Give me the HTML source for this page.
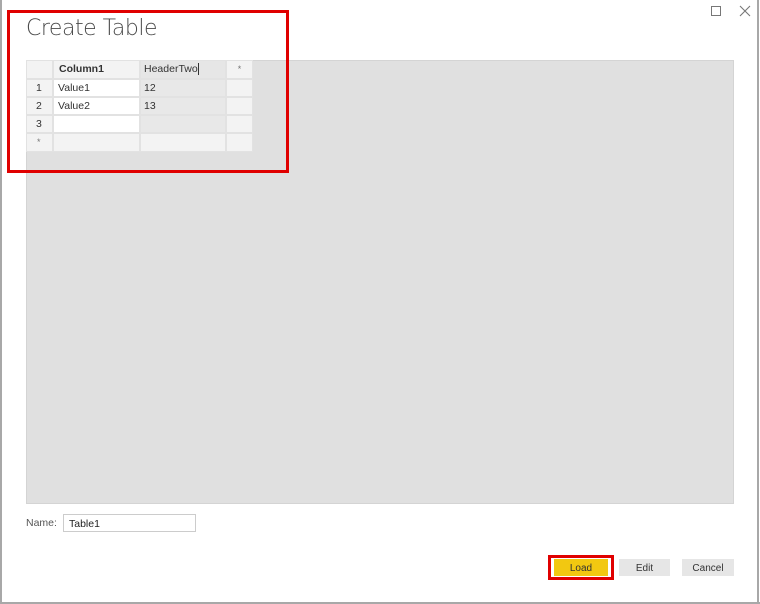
<!DOCTYPE html>
<html><head><style>
body{margin:0;width:760px;height:604px;background:#fff;position:relative;overflow:hidden;font-family:"Liberation Sans",sans-serif;}
.a{position:absolute;box-sizing:border-box}
.c{position:absolute;box-sizing:border-box;font-size:10.5px;color:#333;line-height:17px;padding-left:4px}
</style></head><body>
<div class="a" style="left:0;top:0;width:2px;height:604px;background:#a8a8a8"></div>
<div class="a" style="left:757px;top:0;width:2px;height:604px;background:#a8a8a8"></div>
<div class="a" style="left:0;top:602px;width:760px;height:2px;background:#a8a8a8"></div>
<div class="a" style="left:26px;top:16px;font-size:22px;color:#4a4a4a;font-family:'DejaVu Sans','Liberation Sans',sans-serif;font-weight:300;letter-spacing:-0.5px">Create Table</div>
<div class="a" style="left:711px;top:6px;width:10px;height:10px;border:1px solid #777"></div>
<svg class="a" style="left:739px;top:5px" width="12" height="12"><path d="M1 1L11 11M11 1L1 11" stroke="#777" stroke-width="1.1"/></svg>
<div class="a" style="left:26px;top:60px;width:708px;height:444px;background:#e0e0e0;border:1px solid #d4d4d4"></div>
<div class="a" style="left:26px;top:60px;width:227px;height:92px;background:#e2e2e2"></div>
<div class="c" style="left:27px;top:61px;width:25px;height:17px;background:#f3f3f3"></div>
<div class="c" style="left:54px;top:61px;width:85px;height:17px;background:#f3f3f3;font-weight:bold;padding-left:5px">Column1</div>
<div class="c" style="left:141px;top:61px;width:84px;height:17px;background:#e6e6e6;padding-left:3px">HeaderTwo<span style="border-left:1px solid #333;margin-left:0"></span></div>
<div class="c" style="left:227px;top:61px;width:25px;height:17px;background:#f3f3f3;text-align:center;padding:0;font-size:9px;color:#777">*</div>
<div class="c" style="left:27px;top:80px;width:25px;height:16px;background:#f3f3f3;padding-left:9px">1</div>
<div class="c" style="left:54px;top:80px;width:85px;height:16px;background:#fff">Value1</div>
<div class="c" style="left:141px;top:80px;width:84px;height:16px;background:#e8e8e8;padding-left:3px">12</div>
<div class="c" style="left:227px;top:80px;width:25px;height:16px;background:#f3f3f3"></div>
<div class="c" style="left:27px;top:98px;width:25px;height:16px;background:#f3f3f3;padding-left:9px">2</div>
<div class="c" style="left:54px;top:98px;width:85px;height:16px;background:#fff">Value2</div>
<div class="c" style="left:141px;top:98px;width:84px;height:16px;background:#e8e8e8;padding-left:3px">13</div>
<div class="c" style="left:227px;top:98px;width:25px;height:16px;background:#f3f3f3"></div>
<div class="c" style="left:27px;top:116px;width:25px;height:16px;background:#f3f3f3;padding-left:9px">3</div>
<div class="c" style="left:54px;top:116px;width:85px;height:16px;background:#fff"></div>
<div class="c" style="left:141px;top:116px;width:84px;height:16px;background:#e8e8e8"></div>
<div class="c" style="left:227px;top:116px;width:25px;height:16px;background:#f3f3f3"></div>
<div class="c" style="left:27px;top:134px;width:25px;height:17px;background:#f3f3f3;padding-left:10px;font-size:9px;color:#777">*</div>
<div class="c" style="left:54px;top:134px;width:85px;height:17px;background:#f3f3f3"></div>
<div class="c" style="left:141px;top:134px;width:84px;height:17px;background:#f3f3f3"></div>
<div class="c" style="left:227px;top:134px;width:25px;height:17px;background:#f3f3f3"></div>
<div class="a" style="left:7px;top:10px;width:282px;height:163px;border:3px solid #e00000"></div>
<div class="a" style="left:26px;top:517px;font-size:10.5px;color:#555">Name:</div>
<div class="a" style="left:63px;top:514px;width:133px;height:18px;border:1px solid #ccc;font-size:10.5px;color:#222;padding:3px 0 0 5px">Table1</div>
<div class="a" style="left:548px;top:555px;width:66px;height:25px;border:3px solid #e00000;background:#fff"></div>
<div class="a" style="left:554px;top:559px;width:54px;height:17px;background:#f2c811;font-size:10px;color:#333;text-align:center;line-height:19px">Load</div>
<div class="a" style="left:619px;top:559px;width:51px;height:17px;background:#e6e6e6;font-size:10px;color:#333;text-align:center;line-height:19px">Edit</div>
<div class="a" style="left:682px;top:559px;width:52px;height:17px;background:#e6e6e6;font-size:10px;color:#333;text-align:center;line-height:19px">Cancel</div>
</body></html>
